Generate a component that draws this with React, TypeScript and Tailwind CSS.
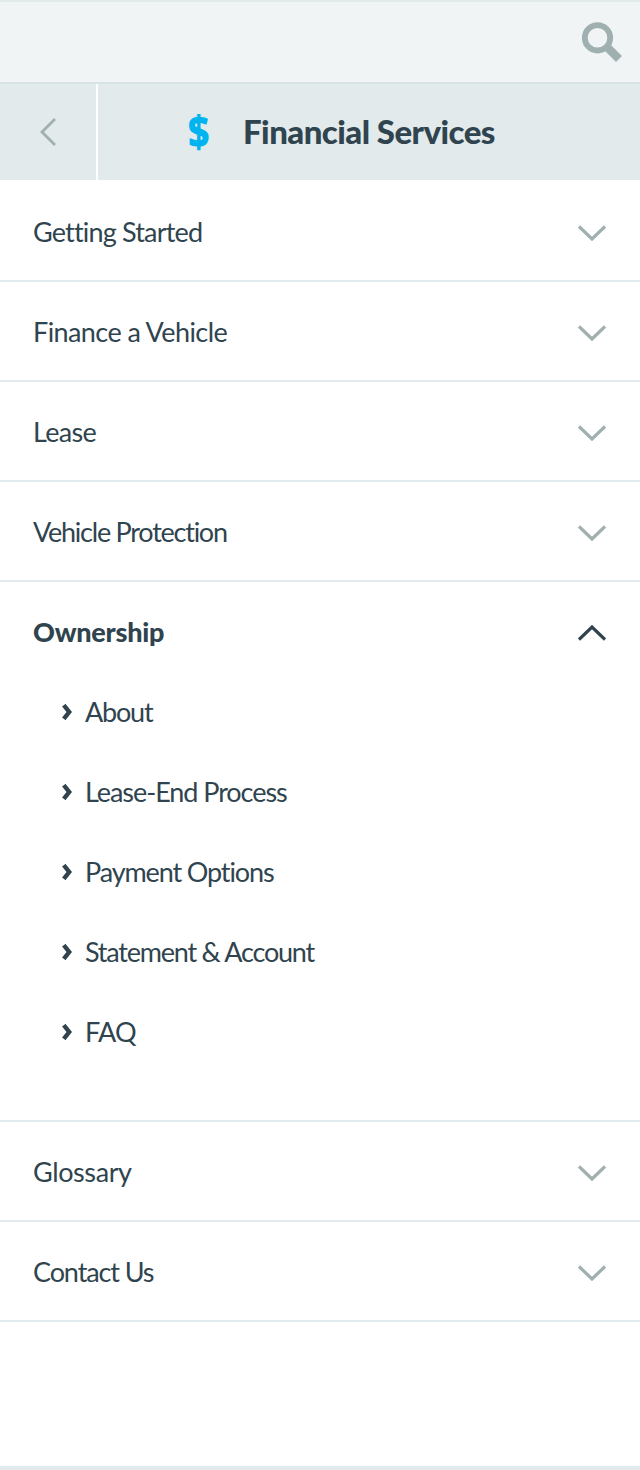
const down = 'M1 1.5 14 14 27 1.5';
const up = 'M1 14.5 14 2 27 14.5';

function Chevron({ open = false }: { open?: boolean }) {
  return (
    <svg className="mt-1 h-4 w-7" viewBox="0 0 28 16" fill="none" stroke={open ? '#2f444e' : '#a0afb0'} strokeWidth="3.2">
      <path d={open ? up : down} />
    </svg>
  );
}

function Row({ label, spacing }: { label: string; spacing: string }) {
  return (
    <button className="flex h-[100px] w-full items-center justify-between border-b-2 border-[#e1eaec] pr-[34px] pl-[33px]">
      <span className={`whitespace-nowrap ${spacing}`}>{label}</span>
      <Chevron />
    </button>
  );
}

const subItems = [
  { label: 'About', spacing: 'tracking-[-1.2px]' },
  { label: 'Lease-End Process', spacing: 'tracking-[-1.06px]' },
  { label: 'Payment Options', spacing: 'tracking-[-1.12px]' },
  { label: 'Statement & Account', spacing: 'tracking-[-1.22px]' },
  { label: 'FAQ', spacing: 'tracking-[-0.8px]' },
];

export default function App() {
  return (
    <div className="flex h-[1470px] w-[640px] flex-col border-b-4 border-[#e2eaec] bg-white font-['Lato',sans-serif] text-[27px] leading-none text-[#2f444e]">
      <header className="flex h-[84px] shrink-0 items-center justify-end border-t-2 border-b-2 border-t-[#e2eaec] border-b-[#d9e3e5] bg-[#f0f4f5] pr-[18px]">
        <svg className="h-10 w-10" viewBox="0 0 40 40" fill="none" stroke="#a0afb0">
          <circle cx="15.5" cy="15.8" r="12.7" strokeWidth="5.8" />
          <path d="M24.5 24.5 37 37" strokeWidth="8.4" />
        </svg>
      </header>
      <div className="flex h-24 shrink-0 bg-[#e2eaec]">
        <button className="flex w-[98px] items-center justify-center border-r-2 border-white">
          <svg className="h-7 w-4" viewBox="0 0 16 28" fill="none" stroke="#a0afb0" strokeWidth="2.8">
            <path d="M15 1 2 14 15 27" />
          </svg>
        </button>
        <div className="flex flex-1 items-center pl-[90px]">
          <span className="mb-0.5 w-[22px] origin-left scale-x-[.84] font-['Open_Sans',sans-serif] text-[44px] font-extrabold text-[#00b4f0]">$</span>
          <h1 className="mb-0.5 ml-[33px] text-[33px] font-black whitespace-nowrap tracking-[-0.54px]">Financial Services</h1>
        </div>
      </div>
      <nav className="pt-0.5">
        <Row label="Getting Started" spacing="tracking-[-0.82px]" />
        <Row label="Finance a Vehicle" spacing="tracking-[-0.58px]" />
        <Row label="Lease" spacing="tracking-[-0.7px]" />
        <Row label="Vehicle Protection" spacing="tracking-[-1.24px]" />
        <section className="h-[540px] border-b-2 border-[#e1eaec]">
          <button className="flex h-[98px] w-full items-center justify-between pr-[34px] pl-[33px]">
            <span className="font-black tracking-[-0.25px]">Ownership</span>
            <Chevron open />
          </button>
          <ul className="-mt-2">
            {subItems.map((item) => (
              <li key={item.label} className="flex h-20 items-center pl-[62px]">
                <svg className="h-4 w-[10px]" viewBox="0 0 10 16" fill="none" stroke="#2f444e" strokeWidth="4.4">
                  <path d="M1.8 1.2 7.2 8 1.8 14.8" />
                </svg>
                <span className={`mb-0.5 ml-[13px] whitespace-nowrap ${item.spacing}`}>{item.label}</span>
              </li>
            ))}
          </ul>
        </section>
        <Row label="Glossary" spacing="tracking-[-0.4px]" />
        <Row label="Contact Us" spacing="tracking-[-1.1px]" />
      </nav>
    </div>
  );
}
